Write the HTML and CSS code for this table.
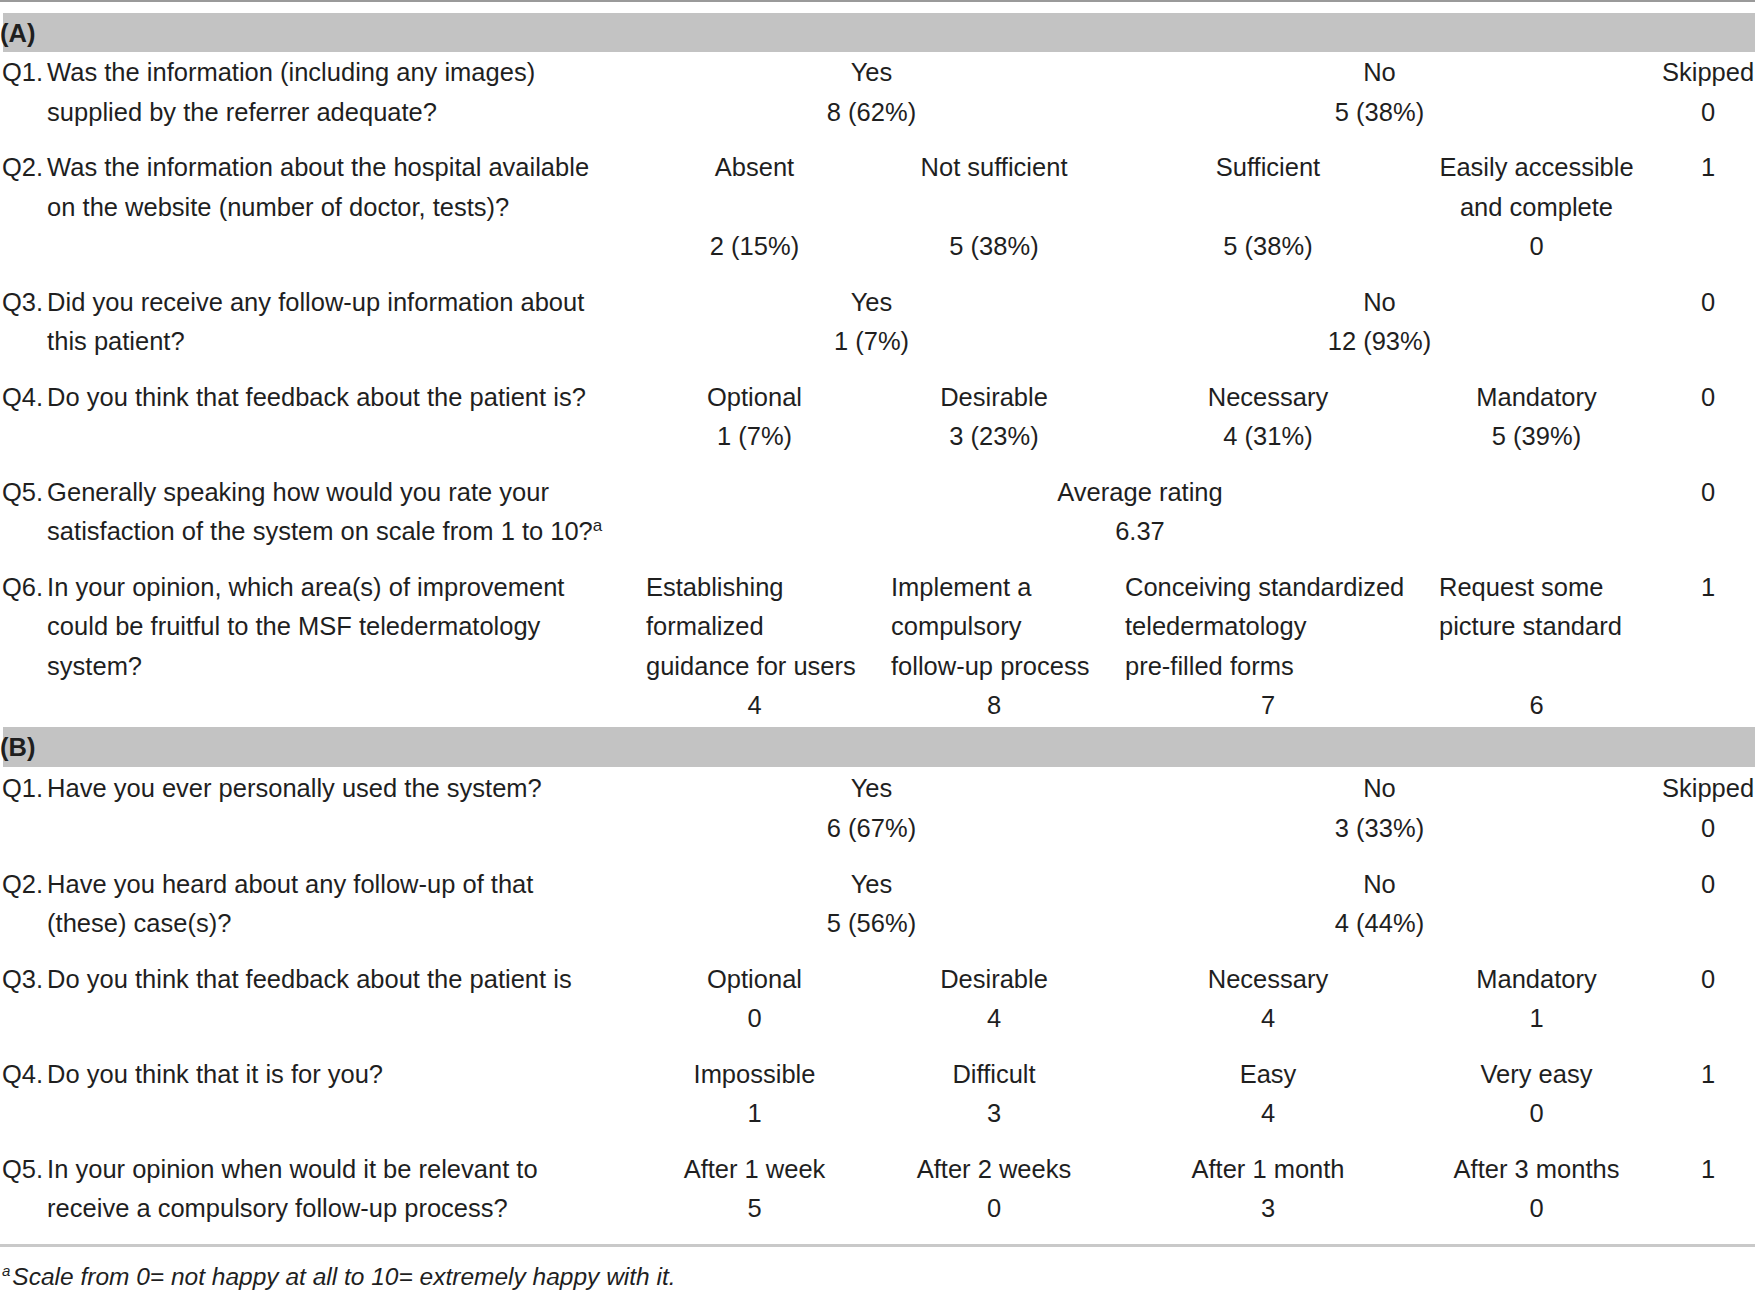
FILE: index.html
```html
<!DOCTYPE html>
<html lang="en">

<head>
    <meta charset="UTF-8">
    <title>Teledermatology survey</title>
    <link rel="stylesheet" href="styles.css">
</head>

<body>
    <div class="survey">
        <div class="rule-top"></div>

        <div class="band">(A)</div>

        <div class="row">
            <div class="q"><span class="qn">Q1.</span><span class="qt">Was the information (including any images)<br>supplied by the referrer adequate?</span></div>
            <div class="opt span2"><span>Yes</span><span>8 (62%)</span></div>
            <div class="opt span2"><span>No</span><span>5 (38%)</span></div>
            <div class="opt skip"><span>Skipped</span><span>0</span></div>
        </div>

        <div class="row">
            <div class="q"><span class="qn">Q2.</span><span class="qt">Was the information about the hospital available<br>on the website (number of doctor, tests)?</span></div>
            <div class="opt"><span>Absent</span><span>2 (15%)</span></div>
            <div class="opt"><span>Not sufficient</span><span>5 (38%)</span></div>
            <div class="opt"><span>Sufficient</span><span>5 (38%)</span></div>
            <div class="opt"><span>Easily accessible<br>and complete</span><span>0</span></div>
            <div class="opt skip"><span>1</span></div>
        </div>

        <div class="row">
            <div class="q"><span class="qn">Q3.</span><span class="qt">Did you receive any follow-up information about<br>this patient?</span></div>
            <div class="opt span2"><span>Yes</span><span>1 (7%)</span></div>
            <div class="opt span2"><span>No</span><span>12 (93%)</span></div>
            <div class="opt skip"><span>0</span></div>
        </div>

        <div class="row">
            <div class="q"><span class="qn">Q4.</span><span class="qt">Do you think that feedback about the patient is?</span></div>
            <div class="opt"><span>Optional</span><span>1 (7%)</span></div>
            <div class="opt"><span>Desirable</span><span>3 (23%)</span></div>
            <div class="opt"><span>Necessary</span><span>4 (31%)</span></div>
            <div class="opt"><span>Mandatory</span><span>5 (39%)</span></div>
            <div class="opt skip"><span>0</span></div>
        </div>

        <div class="row">
            <div class="q"><span class="qn">Q5.</span><span class="qt">Generally speaking how would you rate your<br>satisfaction of the system on scale from 1 to 10?<sup class="note">a</sup></span></div>
            <div class="opt span4"><span>Average rating</span><span>6.37</span></div>
            <div class="opt skip"><span>0</span></div>
        </div>

        <div class="row last">
            <div class="q"><span class="qn">Q6.</span><span class="qt">In your opinion, which area(s) of improvement<br>could be fruitful to the MSF teledermatology<br>system?</span></div>
            <div class="opt left"><span>Establishing<br>formalized<br>guidance for users</span><span>4</span></div>
            <div class="opt left"><span>Implement a<br>compulsory<br>follow-up process</span><span>8</span></div>
            <div class="opt left"><span>Conceiving standardized<br>teledermatology<br>pre-filled forms</span><span>7</span></div>
            <div class="opt left"><span>Request some<br>picture standard</span><span>6</span></div>
            <div class="opt skip"><span>1</span></div>
        </div>

        <div class="band band-b">(B)</div>

        <div class="row">
            <div class="q"><span class="qn">Q1.</span><span class="qt">Have you ever personally used the system?</span></div>
            <div class="opt span2"><span>Yes</span><span>6 (67%)</span></div>
            <div class="opt span2"><span>No</span><span>3 (33%)</span></div>
            <div class="opt skip"><span>Skipped</span><span>0</span></div>
        </div>

        <div class="row">
            <div class="q"><span class="qn">Q2.</span><span class="qt">Have you heard about any follow-up of that<br>(these) case(s)?</span></div>
            <div class="opt span2"><span>Yes</span><span>5 (56%)</span></div>
            <div class="opt span2"><span>No</span><span>4 (44%)</span></div>
            <div class="opt skip"><span>0</span></div>
        </div>

        <div class="row">
            <div class="q"><span class="qn">Q3.</span><span class="qt">Do you think that feedback about the patient is</span></div>
            <div class="opt"><span>Optional</span><span>0</span></div>
            <div class="opt"><span>Desirable</span><span>4</span></div>
            <div class="opt"><span>Necessary</span><span>4</span></div>
            <div class="opt"><span>Mandatory</span><span>1</span></div>
            <div class="opt skip"><span>0</span></div>
        </div>

        <div class="row">
            <div class="q"><span class="qn">Q4.</span><span class="qt">Do you think that it is for you?</span></div>
            <div class="opt"><span>Impossible</span><span>1</span></div>
            <div class="opt"><span>Difficult</span><span>3</span></div>
            <div class="opt"><span>Easy</span><span>4</span></div>
            <div class="opt"><span>Very easy</span><span>0</span></div>
            <div class="opt skip"><span>1</span></div>
        </div>

        <div class="row">
            <div class="q"><span class="qn">Q5.</span><span class="qt">In your opinion when would it be relevant to<br>receive a compulsory follow-up process?</span></div>
            <div class="opt"><span>After 1 week</span><span>5</span></div>
            <div class="opt"><span>After 2 weeks</span><span>0</span></div>
            <div class="opt"><span>After 1 month</span><span>3</span></div>
            <div class="opt"><span>After 3 months</span><span>0</span></div>
            <div class="opt skip"><span>1</span></div>
        </div>

        <div class="rule-bottom"></div>

        <p class="footnote"><sup class="note">a</sup>Scale from 0= not happy at all to 10= extremely happy with it.</p>
    </div>
</body>

</html>
```

FILE: styles.css
```css
* {
    margin: 0;
    padding: 0;
    box-sizing: border-box;
}

body {
    background: #fff;
    color: #1f1f1f;
    font-family: "Liberation Sans", Arial, sans-serif;
    font-size: 25.5px;
    line-height: 39.5px;
}

.survey {
    width: 1755px;
}

.rule-top {
    height: 2px;
    background-color: #9a9a9a;
}

.band {
    margin: 11px 0 0 3px;
    height: 39px;
    line-height: 40px;
    background-color: #c3c3c3;
    font-weight: bold;
    text-indent: -3px;
}

.band-b {
    margin-top: 1.5px;
    margin-bottom: 1px;
    height: 40px;
    line-height: 41px;
}

.row {
    display: grid;
    grid-template-columns: 616px 217px 206px 286px 195px 92px;
    column-gap: 28px;
    padding: 1px 0 15.1px 2px;
}

.row.last {
    padding-bottom: 0;
}

.q {
    display: flex;
}

.qn {
    flex: none;
    margin-right: 4px;
}

.opt {
    display: flex;
    flex-direction: column;
    justify-content: space-between;
    text-align: center;
    white-space: nowrap;
}

.opt.left span:first-child {
    text-align: left;
}

.span2 {
    grid-column: span 2;
}

.span4 {
    grid-column: span 4;
}

.skip {
    grid-column: 6;
    justify-content: flex-start;
}

.note {
    font-size: 17px;
    line-height: 0;
    vertical-align: 9px;
}

.rule-bottom {
    height: 3px;
    background-color: #c9c9c9;
}

.footnote {
    margin-top: 15px;
    padding-left: 2px;
    font-size: 24.5px;
    line-height: 30px;
    font-style: italic;
}

.footnote .note {
    font-size: 15px;
    margin-right: 2px;
}
```
